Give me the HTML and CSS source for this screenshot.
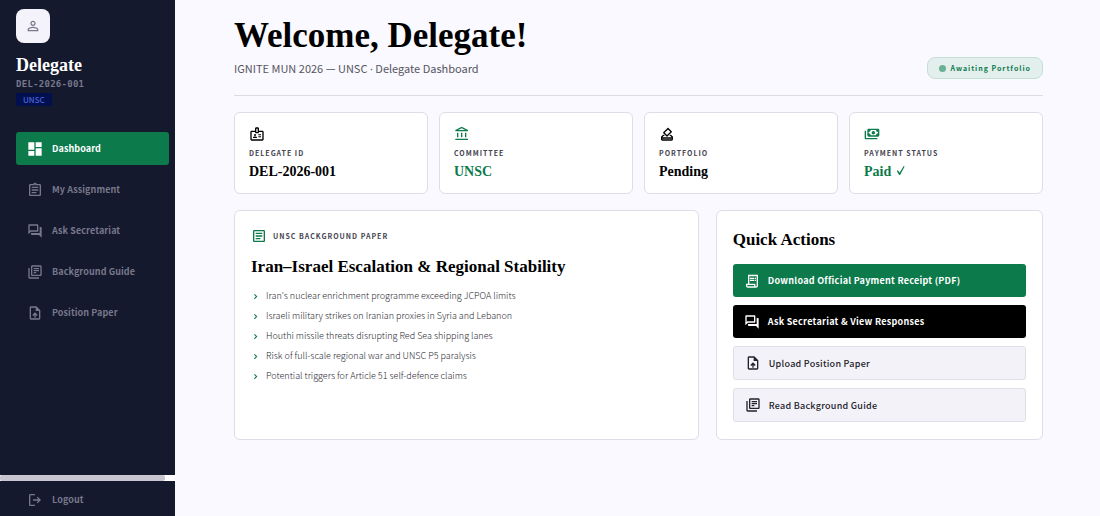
FILE: index.html
```html
<!DOCTYPE html>
<html lang="en">
<head>
    <meta charset="UTF-8">
    <meta name="viewport" content="width=device-width, initial-scale=1.0">
    <title>Delegate Dashboard</title>
    <link rel="stylesheet" href="styles.css">
</head>
<body>
    <!-- Icon set -->
    <svg class="sprite" aria-hidden="true">
        <symbol id="person" viewBox="0 0 24 24"><path d="M12 5.9c1.16 0 2.1.94 2.1 2.1s-.94 2.1-2.1 2.1S9.9 9.16 9.9 8s.94-2.1 2.1-2.1m0 9c2.97 0 6.1 1.46 6.1 2.1v1.1H5.9V17c0-.64 3.13-2.1 6.1-2.1M12 4C9.79 4 8 5.79 8 8s1.79 4 4 4 4-1.79 4-4-1.79-4-4-4zm0 9c-2.67 0-8 1.34-8 4v3h16v-3c0-2.66-5.33-4-8-4z"/></symbol>
        <symbol id="dashboard" viewBox="0 0 24 24"><path d="M2 13h9V2H2v11zm0 9h9v-7H2v7zm11 0h9V11h-9v11zm0-20v7h9V2h-9z"/></symbol>
        <symbol id="assignment" viewBox="0 0 24 24"><path d="M7 15h7v2H7zm0-4h10v2H7zm0-4h10v2H7zm12-4h-4.18C14.4 1.84 13.3 1 12 1s-2.4.84-2.82 2H5c-1.1 0-2 .9-2 2v14c0 1.1.9 2 2 2h14c1.1 0 2-.9 2-2V5c0-1.1-.9-2-2-2zm-7-.25c.41 0 .75.34.75.75s-.34.75-.75.75-.75-.34-.75-.75.34-.75.75-.75zM19 19H5V5h14v14z"/></symbol>
        <symbol id="forum" viewBox="0 0 24 24"><path d="M15 4v7H5.17L4 12.17V4h11m1-2H3c-.55 0-1 .45-1 1v14l4-4h10c.55 0 1-.45 1-1V3c0-.55-.45-1-1-1zm5 4h-2v9H6v2c0 .55.45 1 1 1h11l4 4V7c0-.55-.45-1-1-1z"/></symbol>
        <symbol id="books" viewBox="0 0 24 24"><path d="M4 6H2v14c0 1.1.9 2 2 2h14v-2H4V6zm16-4H8c-1.1 0-2 .9-2 2v12c0 1.1.9 2 2 2h12c1.1 0 2-.9 2-2V4c0-1.1-.9-2-2-2zm0 14H8V4h12v12zM10 9h8v2h-8zm0 3h4v2h-4zm0-6h8v2h-8z"/></symbol>
        <symbol id="upload" viewBox="0 0 24 24"><path d="M14 2H6c-1.1 0-1.99.9-1.99 2L4 20c0 1.1.89 2 1.99 2H18c1.1 0 2-.9 2-2V8l-6-6zm4 18H6V4h7v5h5v11zM8 15.01l1.41 1.41L11 14.84V19h2v-4.16l1.59 1.59L16 15.01 12.01 11z"/></symbol>
        <symbol id="logout" viewBox="0 0 24 24"><path d="M5 5h7V3H5c-1.1 0-2 .9-2 2v14c0 1.1.9 2 2 2h7v-2H5V5zm11 2l-1.4 1.45L17.15 11H9v2h8.15l-2.55 2.55L16 17l5-5z"/></symbol>
        <symbol id="badge" viewBox="0 0 24 24"><path d="M20 7h-5V4c0-1.1-.9-2-2-2h-2c-1.1 0-2 .9-2 2v3H4c-1.1 0-2 .9-2 2v11c0 1.1.9 2 2 2h16c1.1 0 2-.9 2-2V9c0-1.1-.9-2-2-2zm-9-3h2v5h-2V4zm9 16H4V9h5c0 1.1.9 2 2 2h2c1.1 0 2-.9 2-2h5v11zM11.08 16.18C10.44 15.9 9.74 15.75 9 15.75s-1.44.15-2.08.43c-.56.24-.92.79-.92 1.39V18h6v-.43c0-.6-.36-1.15-.92-1.39zM14 15.5h4V17h-4zM14 12.5h4V14h-4z"/><circle cx="9" cy="13.5" r="1.5"/></symbol>
        <symbol id="bank" viewBox="0 0 24 24"><path d="M6.5 10h-2v7h2v-7zm6 0h-2v7h2v-7zm8.5 9H2v2h19v-2zm-2.5-9h-2v7h2v-7zm-7-6.74L16.71 6H6.29l5.21-2.74m0-2.26L2 6v2h19V6l-9.5-5z"/></symbol>
        <symbol id="vote" viewBox="0 0 24 24"><path fill-rule="evenodd" d="M18 13h-.68l-2 2h1.91L19 17H5l1.78-2h2.05l-2-2H6l-3 3v4c0 1.1.89 2 1.99 2H19c1.1 0 2-.89 2-2v-4l-3-3zm1 7H5v-1h14v1zM19.11 7.96l-4.95-4.95c-.39-.39-1.02-.39-1.41 0L6.39 9.37c-.39.39-.39 1.02 0 1.41l4.95 4.95c.39.39 1.02.39 1.41 0l6.36-6.36c.39-.39.39-1.01 0-1.41zM12.05 13.61L8.51 10.07l4.95-4.95L17 8.66z"/></symbol>
        <symbol id="payments" viewBox="0 0 24 24"><path fill-rule="evenodd" d="M7 4h14c1.1 0 2 .9 2 2v8c0 1.1-.9 2-2 2H7c-1.1 0-2-.9-2-2V6c0-1.1.9-2 2-2zM10 6c0 1.6-1.4 3-3 3v2c1.6 0 3 1.4 3 3h8c0-1.6 1.4-3 3-3V9c-1.6 0-3-1.4-3-3zM1 7h2v11h17v2H3c-1.1 0-2-.9-2-2z"/><circle cx="14" cy="10" r="2.6"/></symbol>
        <symbol id="article" viewBox="0 0 24 24"><path d="M19 5v14H5V5h14m0-2H5c-1.1 0-2 .9-2 2v14c0 1.1.9 2 2 2h14c1.1 0 2-.9 2-2V5c0-1.1-.9-2-2-2zM14 17H7v-2h7v2zm3-4H7v-2h10v2zm0-4H7V7h10v2z"/></symbol>
        <symbol id="receipt" viewBox="0 0 24 24"><path d="M19.5 3.5L18 2l-1.5 1.5L15 2l-1.5 1.5L12 2l-1.5 1.5L9 2 7.5 3.5 6 2v14H3v3c0 1.66 1.34 3 3 3h12c1.66 0 3-1.34 3-3V2l-1.5 1.5zM15 20H6c-.55 0-1-.45-1-1v-1h10v2zm4-1c0 .55-.45 1-1 1s-1-.45-1-1v-3H8V5h11v14zM9 7h6v2H9zM16 7h2v2h-2zM9 10h6v2H9zM16 10h2v2h-2z"/></symbol>
        <symbol id="chevron" viewBox="0 0 24 24"><path d="M10 5L8 7l5 5-5 5 2 2 7-7z"/></symbol>
        <symbol id="check" viewBox="0 0 24 24"><path d="M4 13l2.5-1.5L10 17 19 2l2 1L11 22H9z"/></symbol>
    </svg>

    <div class="layout">
        <aside class="sidebar">
            <div class="sidebar-body">
                <div class="profile">
                    <div class="avatar"><svg class="icon"><use href="#person"/></svg></div>
                    <h2 class="profile-name">Delegate</h2>
                    <p class="profile-id">DEL-2026-001</p>
                    <span class="tag">UNSC</span>
                </div>
                <nav class="nav">
                    <a href="#" class="nav-link active"><svg class="icon"><use href="#dashboard"/></svg>Dashboard</a>
                    <a href="#" class="nav-link"><svg class="icon"><use href="#assignment"/></svg>My Assignment</a>
                    <a href="#" class="nav-link"><svg class="icon"><use href="#forum"/></svg>Ask Secretariat</a>
                    <a href="#" class="nav-link"><svg class="icon"><use href="#books"/></svg>Background Guide</a>
                    <a href="#" class="nav-link"><svg class="icon"><use href="#upload"/></svg>Position Paper</a>
                </nav>
            </div>
            <div class="scrollbar"><div class="scrollbar-thumb"></div></div>
            <div class="sidebar-footer">
                <a href="#" class="nav-link"><svg class="icon"><use href="#logout"/></svg>Logout</a>
            </div>
        </aside>

        <main class="main">
            <header class="header">
                <div>
                    <h1 class="title">Welcome, Delegate!</h1>
                    <p class="subtitle">IGNITE MUN 2026 — UNSC <span class="separator">·</span> Delegate Dashboard</p>
                </div>
                <div class="status"><span class="status-dot"></span>Awaiting Portfolio</div>
            </header>

            <section class="cards">
                <div class="card">
                    <svg class="icon"><use href="#badge"/></svg>
                    <p class="label">Delegate ID</p>
                    <p class="value">DEL-2026-001</p>
                </div>
                <div class="card">
                    <svg class="icon green"><use href="#bank"/></svg>
                    <p class="label">Committee</p>
                    <p class="value green">UNSC</p>
                </div>
                <div class="card">
                    <svg class="icon"><use href="#vote"/></svg>
                    <p class="label">Portfolio</p>
                    <p class="value">Pending</p>
                </div>
                <div class="card">
                    <svg class="icon green"><use href="#payments"/></svg>
                    <p class="label">Payment Status</p>
                    <p class="value green">Paid <svg class="check"><use href="#check"/></svg></p>
                </div>
            </section>

            <section class="panels">
                <article class="panel">
                    <div class="panel-label">
                        <svg class="icon green"><use href="#article"/></svg>
                        <p class="label">UNSC Background Paper</p>
                    </div>
                    <h2 class="heading">Iran–Israel Escalation &amp; Regional Stability</h2>
                    <ul class="topics">
                        <li><svg class="chevron"><use href="#chevron"/></svg>Iran's nuclear enrichment programme exceeding JCPOA limits</li>
                        <li><svg class="chevron"><use href="#chevron"/></svg>Israeli military strikes on Iranian proxies in Syria and Lebanon</li>
                        <li><svg class="chevron"><use href="#chevron"/></svg>Houthi missile threats disrupting Red Sea shipping lanes</li>
                        <li><svg class="chevron"><use href="#chevron"/></svg>Risk of full-scale regional war and UNSC P5 paralysis</li>
                        <li><svg class="chevron"><use href="#chevron"/></svg>Potential triggers for Article 51 self-defence claims</li>
                    </ul>
                </article>
                <div class="panel">
                    <h2 class="heading">Quick Actions</h2>
                    <div class="actions">
                        <button class="btn btn-green"><svg class="icon"><use href="#receipt"/></svg>Download Official Payment Receipt (PDF)</button>
                        <button class="btn btn-black"><svg class="icon"><use href="#forum"/></svg>Ask Secretariat &amp; View Responses</button>
                        <button class="btn btn-light"><svg class="icon"><use href="#upload"/></svg>Upload Position Paper</button>
                        <button class="btn btn-light"><svg class="icon"><use href="#books"/></svg>Read Background Guide</button>
                    </div>
                </div>
            </section>
        </main>
    </div>
</body>
</html>
```
FILE: styles.css
```css
* {
    margin: 0;
    padding: 0;
    box-sizing: border-box;
}

body {
    background: #faf9ff;
    color: #000;
    font-family: "Noto Sans CJK SC", "Noto Sans", sans-serif;
    font-size: 9px;
}

.sprite {
    display: none;
}

.icon {
    width: 16px;
    height: 16px;
    flex-shrink: 0;
    display: block;
    fill: currentColor;
}

.green {
    color: #0c7a4b;
}

.layout {
    display: flex;
    min-height: 100vh;
}

/* Sidebar */
.sidebar {
    width: 175px;
    flex-shrink: 0;
    display: flex;
    flex-direction: column;
    background: #15192d;
    color: #77788c;
}

.sidebar-body {
    flex: 1;
    padding: 9px 6px 0 16px;
}

.avatar {
    width: 34px;
    height: 34px;
    margin-bottom: 12px;
    display: flex;
    justify-content: center;
    align-items: center;
    background: #f4f2fa;
    border-radius: 8px;
}

.profile-name {
    font-family: "Liberation Serif", serif;
    font-size: 18px;
    line-height: 20px;
    color: #fff;
}

.profile-id {
    font-family: "DejaVu Sans Mono", monospace;
    font-size: 9px;
    font-weight: bold;
    letter-spacing: 0.03em;
    line-height: 18px;
}

.tag {
    display: inline-block;
    vertical-align: top;
    padding: 0 7px;
    background: #02104f;
    color: #4a62d8;
    font-size: 8px;
    font-weight: 500;
    line-height: 13px;
}

.nav {
    display: flex;
    flex-direction: column;
    gap: 8px;
    margin-top: 26px;
}

.nav-link {
    display: flex;
    align-items: center;
    gap: 9px;
    height: 33px;
    padding: 0 11px;
    border-radius: 3px;
    color: inherit;
    font-size: 9px;
    font-weight: bold;
    letter-spacing: 0.01em;
    text-decoration: none;
}

.nav-link.active {
    background: #0c7a4b;
    color: #fff;
}

.scrollbar {
    height: 6px;
    background: #fff;
}

.scrollbar-thumb {
    width: 94%;
    height: 6px;
    background: #c8c4d0;
    border-radius: 2px;
}

.sidebar-footer {
    padding: 2px 6px 0 16px;
}

/* Main */
.main {
    flex: 1;
    min-width: 0;
    padding: 14px 57px 20px 59px;
}

.header {
    display: flex;
    justify-content: space-between;
    align-items: flex-end;
    padding-bottom: 16px;
    border-bottom: 1px solid #dcdbe2;
}

.title {
    font-family: "Liberation Serif", serif;
    font-size: 35px;
    line-height: 44px;
}

.subtitle {
    color: #55555e;
    font-size: 11px;
    line-height: 21px;
}

.separator {
    font-family: "Noto Sans", sans-serif;
}

.status {
    display: flex;
    align-items: center;
    gap: 5px;
    height: 22px;
    padding: 0 11px;
    background: #e3efed;
    border: 1px solid #c5dfd7;
    border-radius: 8px;
    color: #0c7a4b;
    font-size: 7px;
    font-weight: bold;
    letter-spacing: 1px;
}

.status-dot {
    width: 7px;
    height: 7px;
    border-radius: 50%;
    background: #69b094;
}

.cards {
    display: grid;
    grid-template-columns: repeat(4, 1fr);
    gap: 11px;
    margin: 16px 0;
}

.card,
.panel {
    background: #fff;
    border: 1px solid #dfdde6;
    border-radius: 6px;
}

.card {
    padding: 13px 14px 12px;
}

.card .icon {
    margin-bottom: 1px;
}

.label {
    color: #45454f;
    font-size: 7px;
    font-weight: bold;
    letter-spacing: 1px;
    line-height: 20px;
    text-transform: uppercase;
}

.value {
    font-family: "Liberation Serif", serif;
    font-size: 14px;
    font-weight: bold;
    line-height: 18px;
}

.check {
    width: 11px;
    height: 11px;
    fill: currentColor;
}

.panels {
    display: grid;
    grid-template-columns: 142fr 100fr;
    gap: 17px;
}

.panel {
    padding: 16px 16px 17px;
}

.panel-label {
    display: flex;
    align-items: center;
    gap: 6px;
    height: 18px;
    margin-bottom: 9px;
}

.heading {
    font-family: "Liberation Serif", serif;
    font-size: 17px;
    line-height: 26px;
}

.topics {
    margin-top: 6px;
    color: #26262e;
    font-size: 9px;
    font-weight: 300;
    line-height: 20px;
    list-style: none;
}

.topics li {
    display: flex;
    align-items: center;
    gap: 6px;
}

.chevron {
    width: 9px;
    height: 9px;
    fill: #0c7a4b;
}

.actions {
    display: flex;
    flex-direction: column;
    gap: 8px;
    margin-top: 11px;
}

.btn {
    display: flex;
    align-items: center;
    gap: 8px;
    height: 33px;
    padding: 0 11px;
    border: none;
    border-radius: 3px;
    color: #fff;
    font-family: inherit;
    font-size: 9px;
    font-weight: bold;
    letter-spacing: 0.03em;
    cursor: pointer;
}

.btn-green {
    background: #0c7a4b;
}

.btn-black {
    background: #000;
}

.btn-light {
    height: 34px;
    background: #f4f2f9;
    border: 1px solid #dfdde6;
    color: #22222a;
    font-weight: 500;
}

@media (max-width: 800px) {
    .cards {
        grid-template-columns: repeat(2, 1fr);
    }

    .panels {
        grid-template-columns: 1fr;
    }
}
```
